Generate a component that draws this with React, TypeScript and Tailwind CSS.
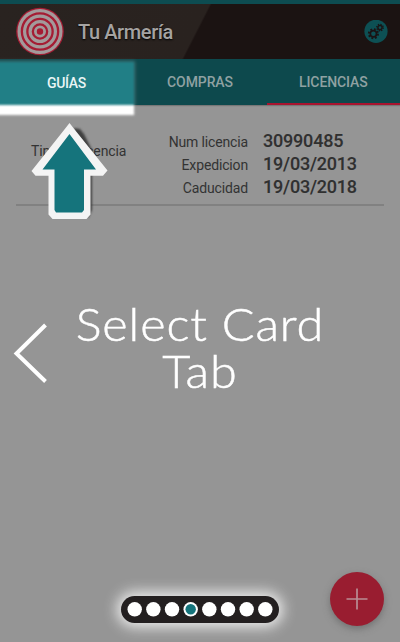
const ROWS = [
  ["Num licencia", "30990485"],
  ["Expedicion", "19/03/2013"],
  ["Caducidad", "19/03/2018"],
];

function Target() {
  return (
    <svg className="ml-[15px] h-[50px] w-[50px] shrink-0" viewBox="0 0 50 50">
      <circle cx="25" cy="24.500" r="23.8" fill="#a51c33" />
      <g fill="none" stroke="#a39a9b" strokeWidth="3.2">
        <circle cx="25" cy="24.500" r="20.9" />
        <circle cx="25" cy="24.500" r="15.4" />
        <circle cx="25" cy="24.500" r="9.9" />
        <circle cx="25" cy="24.500" r="4.6" strokeWidth="2.8" />
      </g>
    </svg>
  );
}

function Gears() {
  return (
    <svg className="mr-[12px] h-6 w-6" viewBox="0 0 24 24">
      <circle cx="12" cy="11.300" r="11.6" fill="#0d5054" />
      <g fill="none" stroke="#1b1314">
        <circle cx="9.4" cy="13.8" r="3.1" strokeWidth="1.7" />
        <circle cx="9.4" cy="13.8" r="4.6" strokeWidth="1.9" strokeDasharray="1.8 1.813" />
        <circle cx="16" cy="7.6" r="2.1" strokeWidth="1.4" />
        <circle cx="16" cy="7.6" r="3.2" strokeWidth="1.4" strokeDasharray="1.25 1.263" />
      </g>
    </svg>
  );
}

function Arrow() {
  return (
    <svg className="absolute left-[24px] top-[116px] h-[108px] w-[96px]" viewBox="24 116 96 108">
      <defs>
        <filter id="soft" x="-20%" y="-20%" width="140%" height="140%">
          <feGaussianBlur stdDeviation="1" />
        </filter>
      </defs>
      <path d="M74 128L80 129L84 134L92 150L92 210L88 218L76 190Z" fill="#414141" filter="url(#soft)" />
      <path
        d="M69.500 123L73 127.500L107.500 170.500L103 175.700H90.500V214.500L86.500 219H52.500L48.500 214.500V175.700H35.500L31.500 171L66 127.500Z"
        fill="#f4f4f4"
      />
      <path d="M69.500 134L96 169.500H84V210L82 212.500H56L54.500 210V169.500H42.500Z" fill="#15747c" />
    </svg>
  );
}

function Dots() {
  return (
    <svg className="h-[27px] w-[158px]" viewBox="0 0 158 27">
      {Array.from({ length: 8 }, (_, i) => (
        <circle key={i} cx={13.7 + i * 18.66} cy="13.3" r="7.2" fill="#fff" />
      ))}
      <circle cx={13.7 + 3 * 18.66} cy="13.3" r="5.2" fill="#15747c" />
    </svg>
  );
}

export default function App() {
  return (
    <div className="relative h-[642px] w-[400px] overflow-hidden bg-[#959595] font-[Roboto,sans-serif]">
      <div className="h-1 bg-[#0d4c51]" />
      <header className="flex h-[55px] items-center bg-[linear-gradient(117deg,#292320_0%,#29221f_49%,#1b1312_49.500%,#1b1312_100%)]">
        <Target />
        <h1 className="ml-[13px] flex-1 text-[20px] font-medium leading-6 tracking-[-.4px] text-[#a5a3a2] [text-shadow:0_1px_2px_#000]">
          Tu Armería
        </h1>
        <Gears />
      </header>
      <nav className="grid h-[46px] grid-cols-3 grid-rows-[46px] bg-[#0d494d] text-center text-[14px] font-medium leading-[47px] tracking-[-.1px] text-[#8fa1a2] shadow-[0_1px_1px_#777]">
        <div />
        <div>COMPRAS</div>
        <div className="border-b-2 border-[#a9142f]">LICENCIAS</div>
      </nav>
      <section className="mx-4 flex h-[101px] border-b-2 border-[#818181] pt-[25px] text-[#333]">
        <div className="w-[112px] pl-[15px] pt-[11px] text-[14px] leading-5">
          <span className="whitespace-nowrap tracking-[-.15px]">Tipo de licencia</span>
        </div>
        <div className="grid flex-1 auto-rows-[23px] grid-cols-[120px_1fr] gap-x-[15px]">
          {ROWS.map(([label, value]) => (
            <div key={label} className="contents">
              <div className="text-right text-[14px] leading-[24px] tracking-[-.15px]">{label}</div>
              <div className="text-[18px] font-medium leading-[22px] tracking-[-.2px] text-[#303030] [-webkit-text-stroke:.1px_#303030]">
                {value}
              </div>
            </div>
          ))}
        </div>
      </section>

      <div className="absolute left-[-3px] top-[62px] h-[53px] w-[137px] bg-[linear-gradient(#217f86_0px,#217f86_43px,#fff_43px)] shadow-[0_0_3px_1px_#bbb5] blur-[.8px]" />
      <div className="absolute left-0 top-[62px] w-[133px] text-center text-[14px] font-medium leading-[42px] tracking-[-.3px] text-[#e9f5f5]">
        GUÍAS
      </div>
      <Arrow />

      <svg className="absolute left-[12px] top-[322px] h-[62px] w-9" viewBox="0 0 36 62">
        <path d="M33.500 3L4.500 31.500L33.500 59.500" fill="none" stroke="#fff" strokeWidth="4" />
      </svg>
      <h2 className="absolute left-0 top-[301px] w-[400px] scale-x-[1.08] text-center font-[Lato,sans-serif] text-[45px] font-light leading-[47px] tracking-[.8px] text-white [-webkit-text-stroke:.5px_#fff]">
        Select Card
        <br />
        Tab
      </h2>

      <div className="absolute left-[121px] top-[596px] h-[27px] w-[158px] rounded-full bg-[#231f20] shadow-[0_0_14px_4px_#eee]">
        <Dots />
      </div>
      <div className="absolute left-[330px] top-[572px] flex h-[54px] w-[54px] items-center justify-center rounded-full bg-[#991d30] shadow-[0_3px_7px_#5558]">
        <svg className="h-[22px] w-[22px]" viewBox="0 0 22 22">
          <path d="M11 .5V21.500M.5 11H21.500" stroke="#b98d94" strokeWidth="1.700" />
        </svg>
      </div>
    </div>
  );
}
